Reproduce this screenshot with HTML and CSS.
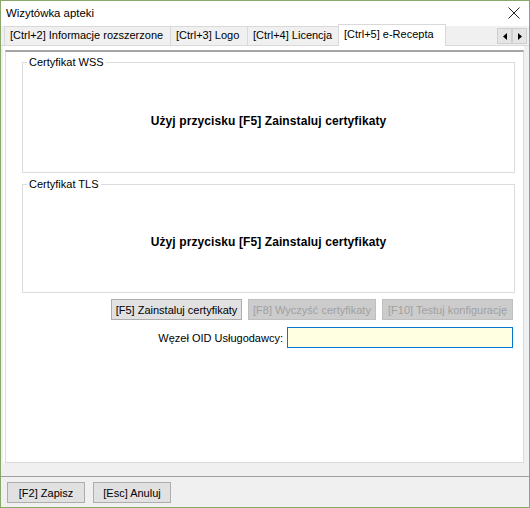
FILE: index.html
```html
<!DOCTYPE html>
<html lang="pl">
<head>
<meta charset="utf-8">
<title>Wizytówka apteki</title>
<link rel="stylesheet" href="styles.css">
</head>
<body>
<div class="window">
  <div class="titlebar">
    <span class="title">Wizytówka apteki</span>
    <svg class="close" width="12" height="12" viewBox="0 0 12 12"><path d="M0.5 0.5L11.5 11.5M11.5 0.5L0.5 11.5" stroke="#222" stroke-width="1" fill="none"/></svg>
  </div>
  <div class="tabheader">
    <div class="tab t1">[Ctrl+2] Informacje rozszerzone</div>
    <div class="tab t2">[Ctrl+3] Logo</div>
    <div class="tab t3">[Ctrl+4] Licencja</div>
    <div class="tab t4 active">[Ctrl+5] e-Recepta</div>
    <div class="scroller">
      <span class="sbtn"><svg width="4" height="7" viewBox="0 0 4 7"><path d="M4 0L0 3.5L4 7Z" fill="#000"/></svg></span>
      <span class="sbtn"><svg width="4" height="7" viewBox="0 0 4 7"><path d="M0 0L4 3.5L0 7Z" fill="#000"/></svg></span>
    </div>
  </div>
  <div class="page">
    <div class="panel">
      <fieldset class="group group-wss">
        <legend>Certyfikat WSS</legend>
        <div class="group-body body-wss"><p class="hint">Użyj przycisku [F5] Zainstaluj certyfikaty</p></div>
      </fieldset>
      <fieldset class="group group-tls">
        <legend>Certyfikat TLS</legend>
        <div class="group-body body-tls"><p class="hint">Użyj przycisku [F5] Zainstaluj certyfikaty</p></div>
      </fieldset>
      <div class="actions">
        <button class="btn btn-install">[F5] Zainstaluj certyfikaty</button>
        <button class="btn btn-clear" disabled>[F8] Wyczyść certyfikaty</button>
        <button class="btn btn-test" disabled>[F10] Testuj konfigurację</button>
      </div>
      <div class="oid-row">
        <label class="oid-label" for="oid">Węzeł OID Usługodawcy:</label>
        <input id="oid" class="oid-input" type="text">
      </div>
    </div>
  </div>
  <div class="footer">
    <button class="btn btn-foot">[F2] Zapisz</button>
    <button class="btn btn-foot">[Esc] Anuluj</button>
  </div>
</div>
</body>
</html>
```
FILE: styles.css
```css
* { box-sizing: border-box; }
html, body { margin: 0; padding: 0; background: #ffffff; }
body {
  font-family: "Liberation Sans", Arial, sans-serif;
  font-size: 11px;
  color: #000;
}
.window {
  width: 530px;
  height: 508px;
  border: 1px solid #89a96b;
  background: #f0f0f0;
  display: flex;
  flex-direction: column;
}
.titlebar {
  height: 25px;
  background: #fff;
  display: flex;
  align-items: center;
  justify-content: space-between;
  padding: 0 9px 0 5px;
  flex: none;
}
.title {
  font-size: 11.4px;
  color: #000;
  padding-bottom: 2px;
}
.close { display: block; margin-top: -1px; }

.tabheader {
  height: 20px;
  flex: none;
  display: flex;
  align-items: flex-end;
  padding: 0 0 0 3px;
  border-bottom: 1px solid #d9d9d9;
  background: #f0f0f0;
  position: relative;
}
.tab {
  height: 19px;
  border: 1px solid #d9d9d9;
  border-bottom: none;
  margin-left: -1px;
  padding: 2px 0 0 5px;
  white-space: nowrap;
  font-size: 11px;
  background: #f0f0f0;
}
.tab:first-child { margin-left: 0; }
.t1 { width: 167px; }
.t2 { width: 78px; }
.t3 { width: 92px; }
.t4 { width: 108px; }
.tab.active {
  height: 22px;
  margin-bottom: -1px;
  background: #fff;
  padding-top: 3px;
  position: relative;
}
.scroller {
  margin-left: auto;
  align-self: flex-start;
  margin-top: 2px;
  margin-right: 2px;
  display: flex;
}
.sbtn {
  width: 15px;
  height: 16px;
  background: #e5e5e5;
  border: 1px solid #cfcfcf;
  display: flex;
  align-items: center;
  justify-content: center;
}

.page {
  flex: none;
  height: 417px;
  margin: 0 5px 0 2px;
  background: #fff;
  padding: 4px 0 0 2px;
}
.panel {
  height: 413px;
  border-top: 2px solid #a5a5a5;
  border-left: 1px solid #dadada;
  border-right: 1px solid #dadada;
  border-bottom: 1px solid #dadada;
  padding: 4px 8px 0 16px;
  display: flex;
  flex-direction: column;
}
.group {
  margin: 0;
  padding: 0;
  border: 1px solid #dcdcdc;
  min-width: 0;
}
.group legend {
  margin-left: 4px;
  padding: 0 2px;
  font-size: 11px;
  line-height: 13px;
  color: #000;
}
.group-tls { margin-top: 5px; }
.group-body {
  display: flex;
  align-items: center;
  justify-content: center;
}
.body-wss { height: 103px; }
.body-tls { height: 101px; }
.hint {
  margin: 0;
  font-weight: bold;
  font-size: 12px;
  letter-spacing: 0.1px;
}
.actions {
  display: flex;
  justify-content: flex-end;
  gap: 6px;
  margin-top: 6px;
  padding-right: 2px;
}
.btn {
  font-family: "Liberation Sans", Arial, sans-serif;
  font-size: 11px;
  height: 21px;
  padding: 0;
  margin: 0;
  background: #e1e1e1;
  border: 1px solid #adadad;
  color: #000;
  border-radius: 0;
}
.btn-install { width: 131px; }
.btn-clear { width: 128px; }
.btn-test { width: 131px; }
.btn:disabled {
  background: #cccccc;
  border-color: #bfbfbf;
  color: #a0a0a0;
}
.oid-row {
  display: flex;
  justify-content: flex-end;
  align-items: center;
  gap: 4px;
  margin-top: 7px;
  padding-right: 2px;
}
.oid-input {
  width: 226px;
  height: 21px;
  margin: 0;
  background: #ffffe1;
  border: 1px solid #0078d7;
  font-family: inherit;
  font-size: 11px;
  outline: none;
}
.footer {
  flex: 1;
  margin-top: 13px;
  border-top: 1px solid #a0a0a0;
  padding: 5px 0 0 6px;
  display: flex;
  gap: 8px;
  align-items: flex-start;
}
.btn-foot { width: 78px; height: 21px; }
```
